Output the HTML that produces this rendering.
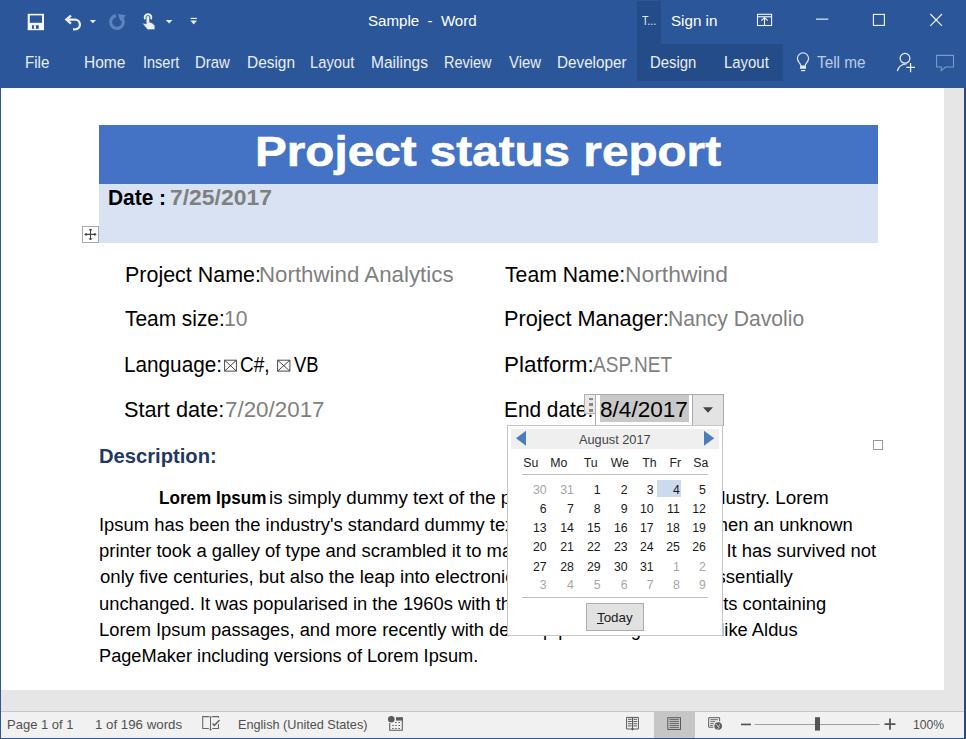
<!DOCTYPE html>
<html><head><meta charset="utf-8">
<style>
*{margin:0;padding:0;box-sizing:border-box}
html,body{width:966px;height:739px;overflow:hidden;background:#fff}
body{position:relative;font-family:"Liberation Sans",sans-serif}
.t{position:absolute;white-space:nowrap;transform-origin:0 50%}
.r{position:absolute}
.n{position:absolute;font-size:12.3px;line-height:12.3px;white-space:nowrap}
svg{position:absolute;overflow:visible}
</style></head><body>
<div class="r" style="left:0;top:0;width:966px;height:88px;background:#2b579a"></div>
<div class="r" style="left:637px;top:1px;width:24px;height:43px;background:#244c88"></div>
<div class="r" style="left:637px;top:44px;width:146px;height:36.5px;background:#244c88"></div>
<div class="r" style="left:0;top:88px;width:1px;height:651px;background:#2b579a"></div>
<div class="r" style="left:944px;top:88px;width:20px;height:623px;background:#e6e6e6"></div>
<div class="r" style="left:964px;top:88px;width:2px;height:651px;background:#254a80"></div>
<div class="r" style="left:1px;top:690px;width:943px;height:21px;background:#e6e6e6"></div>
<div class="r" style="left:1px;top:711px;width:963px;height:1px;background:#c8c8c8"></div>
<div class="r" style="left:1px;top:712px;width:963px;height:26px;background:#f1f1f1"></div>
<div class="r" style="left:0;top:738px;width:966px;height:1px;background:#2b579a"></div>
<div class="r" style="left:654px;top:712px;width:41px;height:26px;background:#c6c6c6"></div>
<!-- header table -->
<div class="r" style="left:99px;top:125px;width:779px;height:58.5px;background:#4472c4"></div>
<div class="r" style="left:99px;top:183.5px;width:779px;height:59px;background:#d9e2f3"></div>
<div class="r" style="left:82px;top:226px;width:17px;height:17px;border:1px solid #a8a8a8;background:#fff"></div>
<div class="r" style="left:873px;top:440px;width:10px;height:10px;border:1px solid #999;background:#fff"></div>
<div class="t" id="title" style="left:368.03px;top:13.38px;font-size:15.50px;line-height:15.50px;color:#fff;font-weight:400;transform:scaleX(0.9727);">Sample&nbsp; -&nbsp; Word</div>
<div class="t" id="signin" style="left:671.02px;top:12.88px;font-size:15.50px;line-height:15.50px;color:#fff;font-weight:400;transform:scaleX(0.9783);">Sign in</div>
<div class="t" id="tdots" style="left:642.00px;top:14.00px;font-size:13.00px;line-height:13.00px;color:#dfe6f1;font-weight:400;transform:scaleX(0.8235);">T...</div>
<div class="t" id="tFile" style="left:25.11px;top:54.20px;font-size:16.30px;line-height:16.30px;color:#e9eef6;font-weight:400;transform:scaleX(0.9292);">File</div>
<div class="t" id="tHome" style="left:83.63px;top:54.20px;font-size:16.30px;line-height:16.30px;color:#e9eef6;font-weight:400;transform:scaleX(0.9524);">Home</div>
<div class="t" id="tIns" style="left:142.68px;top:54.20px;font-size:16.30px;line-height:16.30px;color:#e9eef6;font-weight:400;transform:scaleX(0.8900);">Insert</div>
<div class="t" id="tDraw" style="left:195.47px;top:54.20px;font-size:16.30px;line-height:16.30px;color:#e9eef6;font-weight:400;transform:scaleX(0.9158);">Draw</div>
<div class="t" id="tDes" style="left:246.88px;top:54.20px;font-size:16.30px;line-height:16.30px;color:#e9eef6;font-weight:400;transform:scaleX(0.9479);">Design</div>
<div class="t" id="tLay" style="left:310.47px;top:54.20px;font-size:16.30px;line-height:16.30px;color:#e9eef6;font-weight:400;transform:scaleX(0.9062);">Layout</div>
<div class="t" id="tMail" style="left:371.05px;top:54.20px;font-size:16.30px;line-height:16.30px;color:#e9eef6;font-weight:400;transform:scaleX(0.9534);">Mailings</div>
<div class="t" id="tRev" style="left:443.98px;top:54.20px;font-size:16.30px;line-height:16.30px;color:#e9eef6;font-weight:400;transform:scaleX(0.8885);">Review</div>
<div class="t" id="tView" style="left:509.00px;top:54.20px;font-size:16.30px;line-height:16.30px;color:#e9eef6;font-weight:400;transform:scaleX(0.9143);">View</div>
<div class="t" id="tDev" style="left:556.90px;top:54.20px;font-size:16.30px;line-height:16.30px;color:#e9eef6;font-weight:400;transform:scaleX(0.9370);">Developer</div>
<div class="t" id="tDes2" style="left:649.51px;top:54.20px;font-size:16.30px;line-height:16.30px;color:#e9eef6;font-weight:400;transform:scaleX(0.9143);">Design</div>
<div class="t" id="tLay2" style="left:724.08px;top:54.20px;font-size:16.30px;line-height:16.30px;color:#e9eef6;font-weight:400;transform:scaleX(0.9167);">Layout</div>
<div class="t" id="tTell" style="left:816.58px;top:54.20px;font-size:16.30px;line-height:16.30px;color:#bccce5;font-weight:400;transform:scaleX(0.9412);">Tell me</div>
<div class="t" id="ptitle" style="left:254.91px;top:130.62px;font-size:42.50px;line-height:42.50px;color:#fff;font-weight:700;transform:scaleX(1.1211);-webkit-text-stroke:0.6px #fff;">Project status report</div>
<div class="t" id="pdate" style="left:108.04px;top:187.23px;font-size:21.70px;line-height:21.70px;color:#000;font-weight:700;transform:scaleX(0.9638);">Date :</div>
<div class="t" id="pdatev" style="left:170.15px;top:187.23px;font-size:21.70px;line-height:21.70px;color:#7f7f7f;font-weight:700;transform:scaleX(1.0568);">7/25/2017</div>
<div class="t" id="r1a" style="left:124.62px;top:263.55px;font-size:21.80px;line-height:21.80px;color:#000;font-weight:400;transform:scaleX(0.9844);">Project Name:</div>
<div class="t" id="r1av" style="left:258.97px;top:263.55px;font-size:21.80px;line-height:21.80px;color:#7f7f7f;font-weight:400;transform:scaleX(1.0229);">Northwind Analytics</div>
<div class="t" id="r1b" style="left:504.80px;top:263.55px;font-size:21.80px;line-height:21.80px;color:#000;font-weight:400;transform:scaleX(0.9721);">Team Name:</div>
<div class="t" id="r1bv" style="left:624.52px;top:263.55px;font-size:21.80px;line-height:21.80px;color:#7f7f7f;font-weight:400;transform:scaleX(1.0484);">Northwind</div>
<div class="t" id="r2a" style="left:125.41px;top:307.65px;font-size:21.80px;line-height:21.80px;color:#000;font-weight:400;transform:scaleX(0.9578);">Team size:</div>
<div class="t" id="r2av" style="left:224.46px;top:307.65px;font-size:21.80px;line-height:21.80px;color:#7f7f7f;font-weight:400;transform:scaleX(0.9682);">10</div>
<div class="t" id="r2b" style="left:503.81px;top:307.65px;font-size:21.80px;line-height:21.80px;color:#000;font-weight:400;transform:scaleX(0.9939);">Project Manager:</div>
<div class="t" id="r2bv" style="left:667.65px;top:307.65px;font-size:21.80px;line-height:21.80px;color:#7f7f7f;font-weight:400;transform:scaleX(0.9688);">Nancy Davolio</div>
<div class="t" id="r3a" style="left:124.46px;top:353.85px;font-size:21.80px;line-height:21.80px;color:#000;font-weight:400;transform:scaleX(0.9510);">Language:</div>
<div class="t" id="r3a2" style="left:240.25px;top:353.85px;font-size:21.80px;line-height:21.80px;color:#000;font-weight:400;transform:scaleX(0.8719);">C#,</div>
<div class="t" id="r3a3" style="left:294.11px;top:353.85px;font-size:21.80px;line-height:21.80px;color:#000;font-weight:400;transform:scaleX(0.8448);">VB</div>
<div class="t" id="r3b" style="left:503.77px;top:353.85px;font-size:21.80px;line-height:21.80px;color:#000;font-weight:400;transform:scaleX(1.0298);">Platform:</div>
<div class="t" id="r3bv" style="left:593.00px;top:353.85px;font-size:21.80px;line-height:21.80px;color:#7f7f7f;font-weight:400;transform:scaleX(0.8744);">ASP.NET</div>
<div class="t" id="r4a" style="left:124.40px;top:398.75px;font-size:21.80px;line-height:21.80px;color:#000;font-weight:400;transform:scaleX(0.9969);">Start date:</div>
<div class="t" id="r4av" style="left:225.38px;top:398.75px;font-size:21.80px;line-height:21.80px;color:#7f7f7f;font-weight:400;transform:scaleX(1.0263);">7/20/2017</div>
<div class="t" id="r4b" style="left:503.85px;top:398.75px;font-size:21.80px;line-height:21.80px;color:#000;font-weight:400;transform:scaleX(0.9560);">End date:</div>
<div class="t" id="desc" style="left:98.81px;top:445.82px;font-size:20.30px;line-height:20.30px;color:#1f3864;font-weight:700;transform:scaleX(0.9948);">Description:</div>
<div class="t" id="L1" style="left:98.75px;top:517.00px;font-size:17.60px;line-height:17.60px;color:#000;font-weight:400;transform:scaleX(1.0451);">Ipsum has been the industry's standard dummy text ever since the 1500s, when an unknown</div>
<div class="t" id="L2" style="left:98.75px;top:543.20px;font-size:17.60px;line-height:17.60px;color:#000;font-weight:400;transform:scaleX(1.0484);">printer took a galley of type and scrambled it to make a type specimen book. It has survived not</div>
<div class="t" id="L3" style="left:99.79px;top:568.90px;font-size:17.60px;line-height:17.60px;color:#000;font-weight:400;transform:scaleX(1.0542);">only five centuries, but also the leap into electronic typesetting, remaining essentially</div>
<div class="t" id="L4" style="left:98.75px;top:595.50px;font-size:17.60px;line-height:17.60px;color:#000;font-weight:400;transform:scaleX(1.0427);">unchanged. It was popularised in the 1960s with the release of Letraset sheets containing</div>
<div class="t" id="L5" style="left:98.75px;top:621.70px;font-size:17.60px;line-height:17.60px;color:#000;font-weight:400;transform:scaleX(1.0415);">Lorem Ipsum passages, and more recently with desktop publishing software like Aldus</div>
<div class="t" id="L6" style="left:98.76px;top:647.80px;font-size:17.60px;line-height:17.60px;color:#000;font-weight:400;transform:scaleX(1.0341);">PageMaker including versions of Lorem Ipsum.</div>
<div class="t" id="L0a" style="left:159.03px;top:489.90px;font-size:17.60px;line-height:17.60px;color:#000;font-weight:700;transform:scaleX(0.9725);">Lorem Ipsum</div>
<div class="t" id="L0b" style="left:269.31px;top:489.90px;font-size:17.60px;line-height:17.60px;color:#000;font-weight:400;transform:scaleX(1.0682);">is simply dummy text of the printing and typesetting industry. Lorem</div>
<div class="t" id="sPage" style="left:7.46px;top:717.59px;font-size:13.60px;line-height:13.60px;color:#505050;font-weight:400;transform:scaleX(0.9574);">Page 1 of 1</div>
<div class="t" id="sWords" style="left:95.41px;top:717.59px;font-size:13.60px;line-height:13.60px;color:#505050;font-weight:400;transform:scaleX(0.9764);">1 of 196 words</div>
<div class="t" id="sLang" style="left:238.23px;top:717.59px;font-size:13.60px;line-height:13.60px;color:#505050;font-weight:400;transform:scaleX(0.9312);">English (United States)</div>
<div class="t" id="sZoom" style="left:912.62px;top:717.59px;font-size:13.60px;line-height:13.60px;color:#505050;font-weight:400;transform:scaleX(0.8971);">100%</div>

<div class="r" style="left:595px;top:394px;width:129px;height:32px;border:1px solid #a9a9a9;background:#fff"></div>
<div class="r" style="left:584px;top:394px;width:12px;height:20px;border:1px solid #b0b0b0;background:#e8e8e8"></div>
<div class="r" style="left:589px;top:397.6px;width:4px;height:2.7px;background:#8a8a8a"></div>
<div class="r" style="left:589px;top:403.3px;width:4px;height:2.7px;background:#8a8a8a"></div>
<div class="r" style="left:589px;top:409.2px;width:4px;height:2.7px;background:#8a8a8a"></div>
<div class="r" style="left:600.3px;top:395.1px;width:88.6px;height:27.4px;background:#c8c8c8"></div>
<div class="r" style="left:692px;top:395px;width:31px;height:30px;background:#e3e3e3;border-left:1px solid #a9a9a9"></div>
<svg width="10" height="6" style="left:703px;top:407px" viewBox="0 0 9 5"><path d="M0 0 H9 L4.5 5 Z" fill="#444"/></svg>
<div class="r" style="left:507px;top:425px;width:216px;height:211px;border:1px solid #c6c6c6;background:#fff"></div>
<div class="r" style="left:511px;top:429.2px;width:208px;height:19.5px;background:#efefef"></div>
<div class="r" style="left:522px;top:474px;width:186px;height:1px;background:#c0c0c0"></div>
<div class="r" style="left:657px;top:480px;width:24px;height:17px;background:#ccdaee"></div>
<div class="r" style="left:522px;top:597px;width:186px;height:1px;background:#c0c0c0"></div>
<div class="r" style="left:586px;top:603px;width:58px;height:28px;background:#e1e1e1;border:1px solid #adadad"></div>
<div id="cal"><div class="n" style="right:419.4px;top:484.0px;color:#a6a6a6">30</div>
<div class="n" style="right:392.2px;top:484.0px;color:#a6a6a6">31</div>
<div class="n" style="right:365.4px;top:484.0px;color:#1a1a1a">1</div>
<div class="n" style="right:338.3px;top:484.0px;color:#1a1a1a">2</div>
<div class="n" style="right:312.3px;top:484.0px;color:#1a1a1a">3</div>
<div class="n" style="right:286.2px;top:484.0px;color:#1a1a1a">4</div>
<div class="n" style="right:260.2px;top:484.0px;color:#1a1a1a">5</div>
<div class="n" style="right:419.4px;top:503.0px;color:#1a1a1a">6</div>
<div class="n" style="right:392.2px;top:503.0px;color:#1a1a1a">7</div>
<div class="n" style="right:365.4px;top:503.0px;color:#1a1a1a">8</div>
<div class="n" style="right:338.3px;top:503.0px;color:#1a1a1a">9</div>
<div class="n" style="right:312.3px;top:503.0px;color:#1a1a1a">10</div>
<div class="n" style="right:286.2px;top:503.0px;color:#1a1a1a">11</div>
<div class="n" style="right:260.2px;top:503.0px;color:#1a1a1a">12</div>
<div class="n" style="right:419.4px;top:522.1px;color:#1a1a1a">13</div>
<div class="n" style="right:392.2px;top:522.1px;color:#1a1a1a">14</div>
<div class="n" style="right:365.4px;top:522.1px;color:#1a1a1a">15</div>
<div class="n" style="right:338.3px;top:522.1px;color:#1a1a1a">16</div>
<div class="n" style="right:312.3px;top:522.1px;color:#1a1a1a">17</div>
<div class="n" style="right:286.2px;top:522.1px;color:#1a1a1a">18</div>
<div class="n" style="right:260.2px;top:522.1px;color:#1a1a1a">19</div>
<div class="n" style="right:419.4px;top:541.2px;color:#1a1a1a">20</div>
<div class="n" style="right:392.2px;top:541.2px;color:#1a1a1a">21</div>
<div class="n" style="right:365.4px;top:541.2px;color:#1a1a1a">22</div>
<div class="n" style="right:338.3px;top:541.2px;color:#1a1a1a">23</div>
<div class="n" style="right:312.3px;top:541.2px;color:#1a1a1a">24</div>
<div class="n" style="right:286.2px;top:541.2px;color:#1a1a1a">25</div>
<div class="n" style="right:260.2px;top:541.2px;color:#1a1a1a">26</div>
<div class="n" style="right:419.4px;top:560.6px;color:#1a1a1a">27</div>
<div class="n" style="right:392.2px;top:560.6px;color:#1a1a1a">28</div>
<div class="n" style="right:365.4px;top:560.6px;color:#1a1a1a">29</div>
<div class="n" style="right:338.3px;top:560.6px;color:#1a1a1a">30</div>
<div class="n" style="right:312.3px;top:560.6px;color:#1a1a1a">31</div>
<div class="n" style="right:286.2px;top:560.6px;color:#a6a6a6">1</div>
<div class="n" style="right:260.2px;top:560.6px;color:#a6a6a6">2</div>
<div class="n" style="right:419.4px;top:579.2px;color:#a6a6a6">3</div>
<div class="n" style="right:392.2px;top:579.2px;color:#a6a6a6">4</div>
<div class="n" style="right:365.4px;top:579.2px;color:#a6a6a6">5</div>
<div class="n" style="right:338.3px;top:579.2px;color:#a6a6a6">6</div>
<div class="n" style="right:312.3px;top:579.2px;color:#a6a6a6">7</div>
<div class="n" style="right:286.2px;top:579.2px;color:#a6a6a6">8</div>
<div class="n" style="right:260.2px;top:579.2px;color:#a6a6a6">9</div></div>
<div class="t" id="r4d" style="left:600.39px;top:398.75px;font-size:21.80px;line-height:21.80px;color:#000;font-weight:400;transform:scaleX(1.0357);">8/4/2017</div>
<div class="t" id="cmon" style="left:579.00px;top:433.69px;font-size:12.30px;line-height:12.30px;color:#444;font-weight:400;transform:scaleX(1.0377);">August 2017</div>
<div class="t" id="cd0" style="left:523.30px;top:456.89px;font-size:12.30px;line-height:12.30px;color:#222;font-weight:400;">Su</div>
<div class="t" id="cd1" style="left:550.30px;top:456.89px;font-size:12.30px;line-height:12.30px;color:#222;font-weight:400;">Mo</div>
<div class="t" id="cd2" style="left:583.80px;top:456.89px;font-size:12.30px;line-height:12.30px;color:#222;font-weight:400;">Tu</div>
<div class="t" id="cd3" style="left:610.70px;top:456.89px;font-size:12.30px;line-height:12.30px;color:#222;font-weight:400;">We</div>
<div class="t" id="cd4" style="left:642.20px;top:456.89px;font-size:12.30px;line-height:12.30px;color:#222;font-weight:400;">Th</div>
<div class="t" id="cd5" style="left:669.50px;top:456.89px;font-size:12.30px;line-height:12.30px;color:#222;font-weight:400;">Fr</div>
<div class="t" id="cd6" style="left:693.20px;top:456.89px;font-size:12.30px;line-height:12.30px;color:#222;font-weight:400;">Sa</div>
<div class="t" id="ctoday" style="left:597.00px;top:611.40px;font-size:13.00px;line-height:13.00px;color:#1a1a1a;font-weight:400;transform:scaleX(1.0286);"><u>T</u>oday</div>
<svg width="966" height="739" style="left:0;top:0" viewBox="0 0 966 739">
<!-- save -->
<rect x="27.7" y="13.8" width="16.3" height="16.4" fill="#f4f6fa"/>
<rect x="29.8" y="15.4" width="12.2" height="7.4" fill="#2b579a"/>
<rect x="32" y="25.3" width="6.7" height="3.5" fill="#2b579a"/>
<rect x="33.9" y="25.3" width="2.1" height="3.5" fill="#f4f6fa"/>
<!-- undo -->
<path d="M66.5 19.6 H75 A4.9 4.9 0 0 1 75 29.4 H73" fill="none" stroke="#eef2f8" stroke-width="2.3"/>
<path d="M71 15.6 L66.3 19.6 L71 23.6" fill="none" stroke="#eef2f8" stroke-width="2.3" stroke-linejoin="miter"/>
<path d="M89.8 20 H96 L92.9 23.3 Z" fill="#e8edf5"/>
<!-- redo disabled -->
<path d="M115.9 15.6 A6.4 6.4 0 1 0 121.6 17.5" fill="none" stroke="#5f84bd" stroke-width="3.1"/>
<path d="M117.8 14 L126 15.3 L120.6 21.6 Z" fill="#5f84bd"/>
<!-- touch hand -->
<path d="M145 19.2 A3.4 3.4 0 1 1 151 19.2" fill="none" stroke="#eef2f8" stroke-width="1.9"/>
<path d="M142 23 L146.7 24 V16.3 H149.2 V22 L152.3 23 L154.9 25.6 V29.6 L147.7 29.8 Z" fill="#eef2f8" stroke="#2b579a" stroke-width="0.6"/>
<rect x="146.6" y="16.3" width="2.6" height="8" fill="#eef2f8"/>
<path d="M165.7 19.9 H172.5 L169.1 23.5 Z" fill="#e8edf5"/>
<!-- customize -->
<rect x="190.6" y="17.8" width="6.2" height="1.2" fill="#e8edf5"/>
<path d="M190.4 20.4 H197 L193.7 24.6 Z" fill="#e8edf5"/>
<!-- ribbon display -->
<rect x="757.5" y="14.3" width="14.1" height="11.2" fill="none" stroke="#f4f6fa" stroke-width="1.1"/>
<rect x="757.5" y="16.2" width="14.1" height="1.1" fill="#f4f6fa"/>
<path d="M764.5 17.3 V26" stroke="#f4f6fa" stroke-width="1.1"/>
<path d="M761.3 20.6 L764.5 17.6 L767.7 20.6" fill="none" stroke="#f4f6fa" stroke-width="1.1"/>
<!-- window controls -->
<rect x="816" y="18.6" width="12.3" height="1.1" fill="#f4f6fa"/>
<rect x="873.4" y="14.4" width="11" height="11" fill="none" stroke="#f4f6fa" stroke-width="1.1"/>
<path d="M930.3 14 L942 25.8 M942 14 L930.3 25.8" stroke="#f4f6fa" stroke-width="1.1"/>
<!-- bulb -->
<path d="M800.8 65.6 C800.6 63.2 797.4 61.6 797.4 58.6 A5.6 5.6 0 1 1 808.6 58.6 C808.6 61.6 805.5 63.2 805.3 65.6" fill="none" stroke="#d9e3f2" stroke-width="1.25"/>
<rect x="800.1" y="65.4" width="5.9" height="3.4" fill="#e4ebf5"/>
<rect x="801" y="70" width="4.2" height="1.2" fill="#e4ebf5"/>
<!-- person plus -->
<circle cx="905" cy="58.3" r="4.9" fill="none" stroke="#eef2f8" stroke-width="1.2"/>
<path d="M897.3 71.2 C898.5 66.5 902 64 906.5 64" fill="none" stroke="#eef2f8" stroke-width="1.2"/>
<path d="M906.3 67.4 H915 M910.6 63 V72.2" stroke="#eef2f8" stroke-width="1.2"/>
<!-- comment -->
<path d="M936.6 55.4 H953.5 V67 H945.5 L941.3 70.6 V67 H936.6 Z" fill="none" stroke="#7b9acb" stroke-width="1.1"/>
<!-- table move -->
<path d="M85.6 234.4 H95.4 M90.5 229.5 V239.3" stroke="#444" stroke-width="1.1"/>
<path d="M86.2 233.2 L85 234.4 L86.2 235.6 Z M94.8 233.2 L96 234.4 L94.8 235.6 Z M89.3 230.1 L90.5 228.9 L91.7 230.1 Z M89.3 238.7 L90.5 239.9 L91.7 238.7 Z" fill="#444" stroke="#444" stroke-width="0.9"/>
</svg>
<svg width="966" height="739" style="left:0;top:0" viewBox="0 0 966 739">
<!-- calendar arrows -->
<path d="M516 438.2 L526 430.8 V445.7 Z" fill="#4a7ebb"/>
<path d="M714.2 438.2 L704 430.8 V445.7 Z" fill="#4a7ebb"/>
<!-- status: proofing -->
<path d="M208.9 716.6 H202.7 V728.4 H208.9 M212.3 716.6 H218.5 V717.8 M218.5 724 V728.4 H212.3" fill="none" stroke="#666" stroke-width="1.05"/>
<path d="M209.2 716.9 H211.8 M210.5 716.9 V729.5" fill="none" stroke="#666" stroke-width="1"/>
<path d="M209 729 L210.5 730.8 L212 729 Z" fill="#666"/>
<path d="M212.6 723.4 L214.4 725.3 L219.6 720" fill="none" stroke="#666" stroke-width="1.5"/>
<!-- macro -->
<path d="M389.7 723 V730.3 H402.3 V717.7" fill="none" stroke="#5a5a5a" stroke-width="1.05"/>
<rect x="396" y="717.2" width="6.8" height="3.4" fill="#5a5a5a"/>
<circle cx="391.3" cy="719.3" r="3.3" fill="#5a5a5a"/>
<path d="M395.2 722.5 h1.5 M398.4 722.5 h1.5 M392.2 725.5 h1.5 M395.2 725.5 h1.5 M398.4 725.5 h1.5 M392.2 728.5 h1.5 M395.2 728.5 h1.5 M398.4 728.5 h1.5" stroke="#5a5a5a" stroke-width="1"/>
<!-- read mode -->
<path d="M626.6 717.4 H638.4 V729 H626.6 Z" fill="none" stroke="#5a5a5a" stroke-width="1"/>
<path d="M628 719.3 h3.6 M628 721.5 h3.6 M628 723.7 h3.6 M628 725.9 h3.6 M633.4 719.3 h3.6 M633.4 721.5 h3.6 M633.4 723.7 h3.6 M633.4 725.9 h3.6" stroke="#5a5a5a" stroke-width="1"/>
<path d="M632.5 717.4 V730" stroke="#5a5a5a" stroke-width="1.1"/>
<path d="M631 728.5 L632.5 730.8 L634 728.5 Z" fill="#5a5a5a"/>
<!-- print layout -->
<rect x="667.8" y="717.7" width="12.7" height="11.8" fill="none" stroke="#5a5a5a" stroke-width="1"/>
<path d="M669.5 719.6 h9.4 M669.5 721.6 h9.4 M669.5 723.6 h9.4 M669.5 725.6 h9.4 M669.5 727.6 h9.4" stroke="#5a5a5a" stroke-width="0.9"/>
<!-- web layout -->
<path d="M713.5 727.2 H708.7 V717.7 H719.6 V721.5" fill="none" stroke="#5a5a5a" stroke-width="1"/>
<path d="M710.3 719.7 h7.6 M710.3 721.7 h5 M710.3 723.7 h3.5 M710.3 725.5 h2.5" stroke="#5a5a5a" stroke-width="0.9"/>
<circle cx="718.2" cy="726" r="4.6" fill="#f1f1f1"/>
<circle cx="718.2" cy="726" r="3.8" fill="#5a5a5a"/>
<path d="M715.6 724.3 l1.6 0.6 l0.4 1.6 l1.4 -0.2 l0.8 -2 M717.6 729.4 l0.6 -1.6 l1.5 -0.3" stroke="#d8d8d8" stroke-width="0.8" fill="none"/>
<!-- zoom -->
<rect x="741" y="723.6" width="10" height="1.7" fill="#555"/>
<rect x="754.6" y="724" width="125" height="1" fill="#a0a0a0"/>
<rect x="815" y="717.2" width="5" height="13.4" fill="#555"/>
<path d="M884.5 724.2 H895.5 M890 718.5 V729.7" stroke="#555" stroke-width="1.8"/>
</svg>
<svg width="966" height="739" style="left:0;top:0" viewBox="0 0 966 739">
<path d="M224.6 360.2 H236.4 V371.1 H224.6 Z M224.6 360.2 L236.4 371.1 M236.4 360.2 L224.6 371.1" fill="none" stroke="#333" stroke-width="0.9"/>
<path d="M277.6 360.2 H289.9 V371.1 H277.6 Z M277.6 360.2 L289.9 371.1 M289.9 360.2 L277.6 371.1" fill="none" stroke="#333" stroke-width="0.9"/>
</svg>
</body></html>
